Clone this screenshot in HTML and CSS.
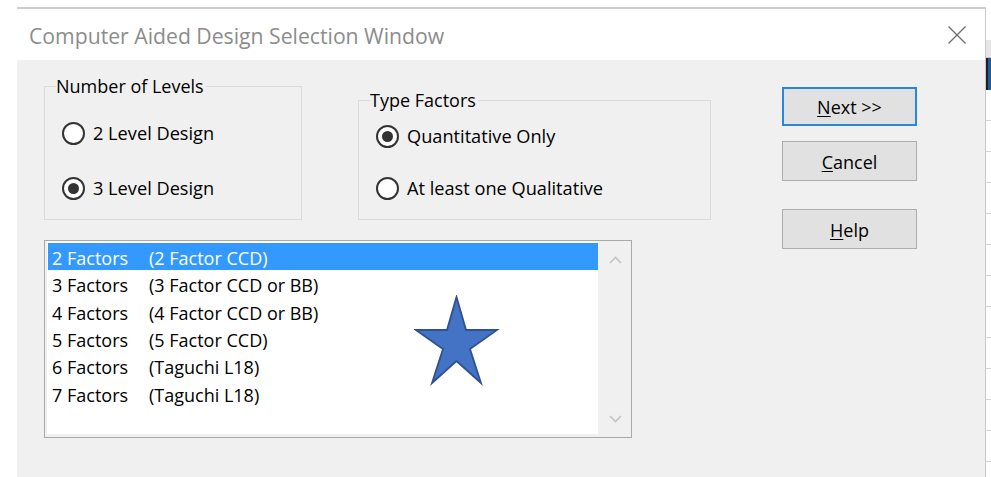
FILE: index.html
```html
<!DOCTYPE html>
<html lang="en">
<head>
<meta charset="utf-8">
<title>Computer Aided Design Selection Window</title>
<link rel="stylesheet" href="styles.css">
</head>
<body>
<div class="screen">
  <div class="dialog">
    <div class="titlebar">
      <span class="title">Computer Aided Design Selection Window</span>
      <button class="close" type="button" aria-label="Close">
        <svg width="20" height="20" viewBox="0 0 20 20"><path d="M1.5 1.5 L18.5 18.5 M18.5 1.5 L1.5 18.5" stroke="#6e6e6e" stroke-width="1.3" fill="none"/></svg>
      </button>
    </div>
    <div class="content">
      <div class="main">
        <div class="groups">
          <fieldset class="group levels">
            <legend>Number of Levels</legend>
            <label class="radio"><span class="bullet"></span>2 Level Design</label>
            <label class="radio checked"><span class="bullet"></span>3 Level Design</label>
          </fieldset>
          <fieldset class="group types">
            <legend>Type Factors</legend>
            <label class="radio checked"><span class="bullet"></span>Quantitative Only</label>
            <label class="radio"><span class="bullet"></span>At least one Qualitative</label>
          </fieldset>
        </div>
        <div class="listbox">
          <ul class="items">
            <li class="selected"><span class="count">2 Factors</span><span>(2 Factor CCD)</span></li>
            <li><span class="count">3 Factors</span><span>(3 Factor CCD or BB)</span></li>
            <li><span class="count">4 Factors</span><span>(4 Factor CCD or BB)</span></li>
            <li><span class="count">5 Factors</span><span>(5 Factor CCD)</span></li>
            <li><span class="count">6 Factors</span><span>(Taguchi L18)</span></li>
            <li><span class="count">7 Factors</span><span>(Taguchi L18)</span></li>
          </ul>
          <div class="scrollbar">
            <svg width="13" height="8" viewBox="0 0 13 8"><path d="M1 7 L6.5 1.5 L12 7" stroke="#c3c3c3" stroke-width="1.6" fill="none"/></svg>
            <svg width="13" height="8" viewBox="0 0 13 8"><path d="M1 1 L6.5 6.5 L12 1" stroke="#c3c3c3" stroke-width="1.6" fill="none"/></svg>
          </div>
          <svg class="star" width="86" height="92" viewBox="0 0 86 92">
            <polygon points="42.5,2 52,35 83,35 56,54 67,88 42.5,66 18,88 29,54 2,35 33,35" fill="#4472c4" stroke="#2f528f" stroke-width="1.8" stroke-linejoin="miter"/>
          </svg>
        </div>
      </div>
      <div class="actions">
        <button class="btn default" type="button"><u>N</u>ext &gt;&gt;</button>
        <button class="btn cancel" type="button"><u>C</u>ancel</button>
        <button class="btn help" type="button"><u>H</u>elp</button>
      </div>
    </div>
  </div>
  <div class="sheet-edge">
    <div class="sheet-header"></div>
    <div class="sheet-active"></div>
    <div class="sheet-rows"></div>
  </div>
</div>
</body>
</html>
```

FILE: styles.css
```css
* {
  box-sizing: border-box;
}

html,
body {
  margin: 0;
  padding: 0;
}

body {
  width: 991px;
  height: 477px;
  overflow: hidden;
  background: #ffffff;
  font-family: "Open Sans", "Noto Sans", sans-serif;
  color: #000000;
}

.screen {
  display: flex;
  height: 477px;
  padding: 7px 0 0 17px;
}

/* dialog frame */
.dialog {
  width: 969px;
  display: flex;
  flex-direction: column;
  border-top: 2px solid #cdcdcd;
  border-right: 1px solid #c8c8c8;
  background: #f0f0f0;
}

.titlebar {
  height: 51px;
  flex: none;
  display: flex;
  align-items: center;
  justify-content: space-between;
  padding-left: 12px;
  background: #ffffff;
}

.title {
  font-size: 21.2px;
  color: #8c8c8c;
  position: relative;
  top: 1px;
}

.close {
  width: 57px;
  height: 51px;
  padding: 0;
  border: 0;
  background: transparent;
  display: flex;
  align-items: center;
  justify-content: center;
}

.content {
  flex: 1;
  display: flex;
  align-items: flex-start;
  padding: 15px 0 0 27px;
}

.main {
  width: 667px;
}

.groups {
  display: flex;
  align-items: flex-start;
  gap: 56px;
}

/* option groups */
.group {
  margin: 0;
  min-width: 0;
  border: 1px solid #dadada;
  padding: 0 10px 17px 17px;
  display: flex;
  flex-direction: column;
}

.group legend {
  font-size: 18px;
  line-height: 22px;
  padding: 0 2px 0 0;
  margin-left: -6px;
}

.levels {
  width: 258px;
  padding-top: 22px;
  gap: 27px;
}

.types {
  width: 353px;
  margin-top: 14px;
  padding-top: 11px;
  gap: 24px;
}

.radio {
  height: 28px;
  display: flex;
  align-items: center;
  gap: 8px;
  font-size: 18.2px;
}

.bullet {
  width: 23px;
  height: 23px;
  flex: none;
  border: 2px solid #333333;
  border-radius: 50%;
  background: #ffffff;
  display: flex;
  align-items: center;
  justify-content: center;
}

.checked .bullet::after {
  content: "";
  width: 11px;
  height: 11px;
  border-radius: 50%;
  background: #333333;
}

/* list of designs */
.listbox {
  position: relative;
  margin-top: 20px;
  width: 588px;
  height: 198px;
  display: flex;
  border: 1px solid #a9a9a9;
  background: #f0f0f0;
  padding: 0 0 3px 2px;
}

.items {
  flex: 1;
  margin: 0;
  padding: 2px 0 0 1px;
  list-style: none;
  background: #ffffff;
}

.items li {
  height: 27.33px;
  padding: 3px 0 0 4px;
  line-height: 25px;
  font-size: 18px;
  white-space: nowrap;
}

.items li.selected {
  background: #3399ff;
  color: #ffffff;
}

.count {
  display: inline-block;
  width: 97px;
}

.scrollbar {
  width: 33px;
  flex: none;
  display: flex;
  flex-direction: column;
  align-items: center;
  justify-content: space-between;
  padding: 15px 0 11px 1px;
}

.scrollbar svg {
  display: block;
}

.star {
  position: absolute;
  left: 369px;
  top: 54px;
}

/* command buttons */
.actions {
  width: 135px;
  margin: 12px 0 0 71px;
  display: flex;
  flex-direction: column;
}

.btn {
  height: 40px;
  padding: 1px 0 0;
  border: 1px solid #adadad;
  background: #e1e1e1;
  font-family: inherit;
  font-size: 18px;
  color: #000000;
}

.btn u {
  text-underline-offset: 2px;
  text-decoration-thickness: 1px;
}

.btn.default {
  height: 39px;
  border: 2px solid #2a86db;
}

.btn.cancel {
  margin-top: 15px;
}

.btn.help {
  margin-top: 28px;
}

/* sliver of the sheet behind the dialog */
.sheet-edge {
  flex: 1;
  display: flex;
  flex-direction: column;
  margin-top: 33px;
}

.sheet-header {
  height: 18px;
  background: #e6e6e6;
  border-bottom: 1px solid #c6c6c6;
}

.sheet-active {
  height: 32px;
  background: #1d5c9e;
  border-left: 2px solid #202020;
}

.sheet-rows {
  flex: 1;
  background: repeating-linear-gradient(to bottom, #ffffff 0, #ffffff 30px, #d4d4d4 30px, #d4d4d4 31px);
}
```
